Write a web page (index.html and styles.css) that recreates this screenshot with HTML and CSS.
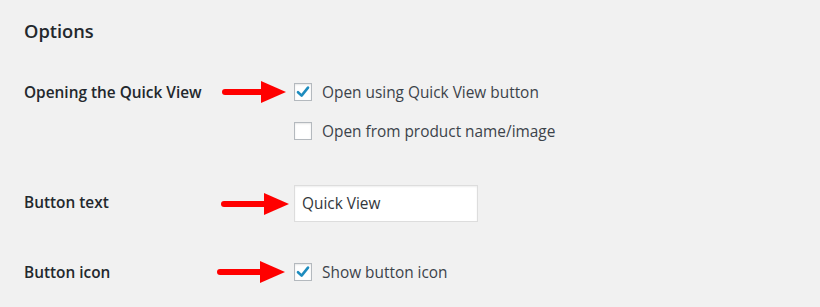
FILE: index.html
```html
<!DOCTYPE html>
<html>
<head>
<meta charset="utf-8">
<link rel="stylesheet" href="styles.css">
</head>
<body>
<div class="wrap">
  <h2 class="title">Options</h2>

  <div class="row row-open">
    <div class="label">Opening the Quick View</div>
    <div class="arrow-cell">
      <svg class="arrow" width="64" height="22" viewBox="0 0 64 22"><line x1="3" y1="11" x2="42" y2="11" stroke="#f00" stroke-width="6" stroke-linecap="round"/><polygon points="39,0 64,11 39,22" fill="#f00"/></svg>
    </div>
    <div class="controls">
      <div class="option">
        <span class="cb checked"><svg viewBox="0 0 18 18" width="18" height="18"><path d="M4 9.2 L7.6 12.6 L14 4.6" fill="none" stroke="#1e8cbe" stroke-width="2.6" stroke-linecap="round" stroke-linejoin="round"/></svg></span>
        <span class="opt-text">Open using Quick View button</span>
      </div>
      <div class="option second">
        <span class="cb"></span>
        <span class="opt-text">Open from product name/image</span>
      </div>
    </div>
  </div>

  <div class="row row-text">
    <div class="label">Button text</div>
    <div class="arrow-cell">
      <svg class="arrow" width="68" height="22" viewBox="0 0 68 22"><line x1="3" y1="11" x2="46" y2="11" stroke="#f00" stroke-width="6" stroke-linecap="round"/><polygon points="43,0 68,11 43,22" fill="#f00"/></svg>
    </div>
    <div class="controls">
      <div class="input">Quick View</div>
    </div>
  </div>

  <div class="row row-icon">
    <div class="label">Button icon</div>
    <div class="arrow-cell left">
      <svg class="arrow" width="68" height="22" viewBox="0 0 68 22"><line x1="3" y1="11" x2="46" y2="11" stroke="#f00" stroke-width="6" stroke-linecap="round"/><polygon points="43,0 68,11 43,22" fill="#f00"/></svg>
    </div>
    <div class="controls">
      <div class="option">
        <span class="cb checked"><svg viewBox="0 0 18 18" width="18" height="18"><path d="M4 9.2 L7.6 12.6 L14 4.6" fill="none" stroke="#1e8cbe" stroke-width="2.6" stroke-linecap="round" stroke-linejoin="round"/></svg></span>
        <span class="opt-text">Show button icon</span>
      </div>
    </div>
  </div>
</div>
</body>
</html>
```

FILE: styles.css
```css
html, body {
  margin: 0;
  padding: 0;
  background: #f1f1f1;
}
body {
  font-family: "Open Sans", "Noto Sans", sans-serif;
  color: #23282d;
  width: 820px;
  height: 307px;
  overflow: hidden;
}
.wrap {
  padding: 19px 24px 0 24px;
}
.title {
  margin: 0;
  font-size: 18.3px;
  line-height: 24px;
  font-weight: 600;
  color: #23282d;
}
.row {
  display: grid;
  grid-template-columns: 198px 72px 1fr;
  align-items: start;
}
.row-open { margin-top: 40px; }
.row-text { margin-top: 45px; align-items: center; }
.row-icon { margin-top: 41px; }
.label {
  font-size: 15.4px;
  font-weight: 600;
  line-height: 20px;
  margin-top: 0;
  white-space: nowrap;
}
.row-text .label { margin-top: -2px; }
.arrow-cell {
  height: 18px;
  display: flex;
  align-items: center;
}
.row-text .arrow-cell { height: 37px; margin-left: -1px; }
.arrow-cell.left { margin-left: -5px; }
.arrow { display: block; flex: none; }
.controls {
  display: flex;
  flex-direction: column;
}
.option {
  display: flex;
  align-items: center;
  height: 18px;
}
.option.second { margin-top: 21px; }
.cb {
  box-sizing: border-box;
  width: 18px;
  height: 18px;
  border: 1px solid #b4b9be;
  background: #fff;
  box-shadow: inset 0 1px 2px rgba(0,0,0,0.1);
  flex: none;
  position: relative;
}
.cb svg {
  position: absolute;
  left: -1px;
  top: -1px;
}
.opt-text {
  margin-left: 10px;
  font-size: 15.4px;
  color: #3c434a;
  white-space: nowrap;
}
.input {
  box-sizing: border-box;
  width: 184px;
  height: 37px;
  border: 1px solid #ddd;
  background: #fff;
  box-shadow: inset 0 1px 2px rgba(0,0,0,0.07);
  padding-left: 7px;
  font-size: 15.4px;
  line-height: 35px;
  color: #32373c;
}
```
